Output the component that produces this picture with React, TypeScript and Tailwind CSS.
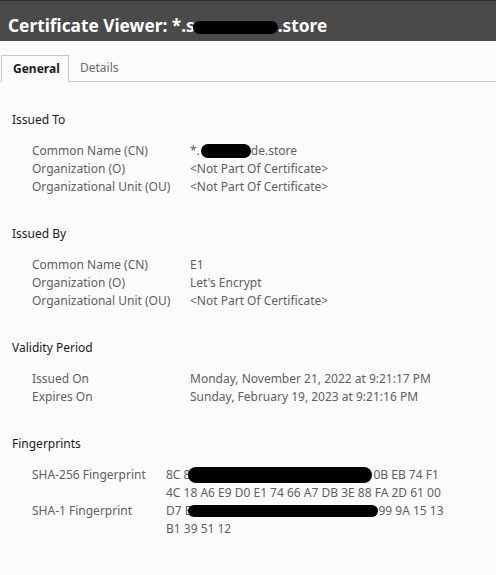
import React from "react";

type Row = { label: string; value: React.ReactNode };

const Blob = ({ w, h = 14, cls = "" }: { w: number; h?: number; cls?: string }) => (
  <span
    className={`inline-block bg-black rounded-full align-middle ${cls}`}
    style={{ width: w, height: h }}
  />
);

function Section({ title, rows, labelW }: { title: string; rows: Row[]; labelW: number }) {
  return (
    <section className="mb-[29px]">
      <h2 className="text-[12px] leading-[18px] text-[#1a1a1a] pl-3 mb-[13px]">{title}</h2>
      <div className="pl-8">
        {rows.map((r, i) => (
          <div key={i} className="flex text-[12px] leading-[18px] text-[#5f5f5f]">
            <div className="shrink-0" style={{ width: labelW }}>
              {r.label}
            </div>
            <div>{r.value}</div>
          </div>
        ))}
      </div>
    </section>
  );
}

export default function App() {
  return (
    <div
      className="w-[496px] h-[575px] overflow-hidden bg-[#fbfbfb] flex flex-col"
      style={{ fontFamily: '"Noto Sans", "Open Sans", sans-serif' }}
    >
      {/* Title bar */}
      <header className="h-[41px] bg-[#4a4a4a] border-t border-[#2e2e2e] shrink-0 flex items-end pl-2 pb-[3px]">
        <h1 className="text-[17.3px] font-bold text-white leading-[24px] flex items-center">
          Certificate Viewer: *.s
          <Blob w={85} h={13} cls="-ml-[2px] mt-[2px]" />
          .store
        </h1>
      </header>

      {/* Tabs */}
      <nav className="mt-[14px] flex items-end border-b border-[#c8c8c8] h-[27px] shrink-0 pl-[1px]">
        <div className="h-[27px] -mb-px w-[68px] pl-[11px] border border-[#c8c8c8] border-b-[#fbfbfb] bg-[#fbfbfb] flex items-center text-[12px] font-bold text-[#1a1a1a]">
          General
        </div>
        <div className="h-[26px] pl-[11px] flex items-center text-[12px] text-[#6a6a6a]">Details</div>
      </nav>

      <main className="pt-[29px]">
        <Section
          title="Issued To"
          labelW={158}
          rows={[
            {
              label: "Common Name (CN)",
              value: (
                <span className="inline-flex items-center">
                  *.
                  <Blob w={50} h={14} cls="ml-[1px]" />
                  de.store
                </span>
              ),
            },
            { label: "Organization (O)", value: "<Not Part Of Certificate>" },
            { label: "Organizational Unit (OU)", value: "<Not Part Of Certificate>" },
          ]}
        />
        <Section
          title="Issued By"
          labelW={158}
          rows={[
            { label: "Common Name (CN)", value: "E1" },
            { label: "Organization (O)", value: "Let's Encrypt" },
            { label: "Organizational Unit (OU)", value: "<Not Part Of Certificate>" },
          ]}
        />
        <Section
          title="Validity Period"
          labelW={158}
          rows={[
            { label: "Issued On", value: "Monday, November 21, 2022 at 9:21:17 PM" },
            { label: "Expires On", value: "Sunday, February 19, 2023 at 9:21:16 PM" },
          ]}
        />
        <Section
          title="Fingerprints"
          labelW={134}
          rows={[
            {
              label: "SHA-256 Fingerprint",
              value: (
                <div className="w-[290px]">
                  <div className="flex items-center">
                    8C 8<Blob w={184} h={16} cls="-ml-[2px]" />
                    <span className="ml-[1px]">0B EB 74 F1</span>
                  </div>
                  <div>4C 18 A6 E9 D0 E1 74 66 A7 DB 3E 88 FA 2D 61 00</div>
                </div>
              ),
            },
            {
              label: "SHA-1 Fingerprint",
              value: (
                <div className="w-[290px]">
                  <div className="flex items-center">
                    D7 E<Blob w={190} h={12} cls="-ml-[3px]" />
                    <span>99 9A 15 13</span>
                  </div>
                  <div>B1 39 51 12</div>
                </div>
              ),
            },
          ]}
        />
      </main>
    </div>
  );
}
